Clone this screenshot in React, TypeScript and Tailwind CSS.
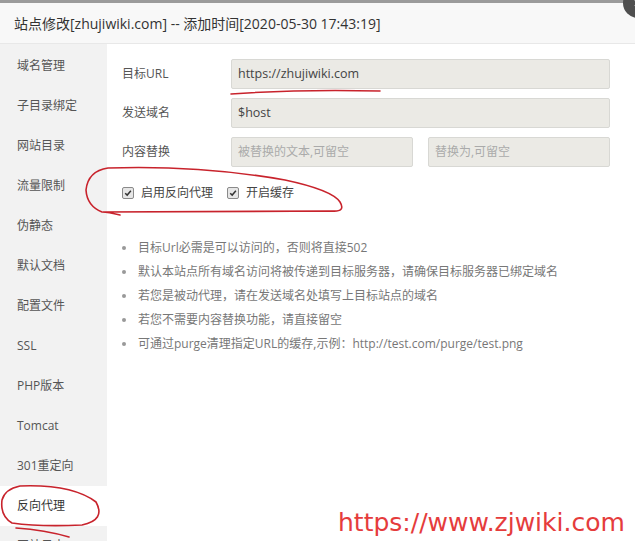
const menu = [
  '域名管理',
  '子目录绑定',
  '网站目录',
  '流量限制',
  '伪静态',
  '默认文档',
  '配置文件',
  'SSL',
  'PHP版本',
  'Tomcat',
  '301重定向',
  '反向代理',
  '网站日志',
]

const tips = [
  '目标Url必需是可以访问的，否则将直接502',
  '默认本站点所有域名访问将被传递到目标服务器，请确保目标服务器已绑定域名',
  '若您是被动代理，请在发送域名处填写上目标站点的域名',
  '若您不需要内容替换功能，请直接留空',
  '可通过purge清理指定URL的缓存,示例：http://test.com/purge/test.png',
]

function Check({ label }: { label: string }) {
  return (
    <label className="flex items-center gap-[7px]">
      <span className="flex h-[12px] w-[12px] items-center justify-center rounded-[2px] border border-[#8a8a8a] bg-[#e6e6e6]">
        <svg viewBox="0 0 10 10" className="h-[8px] w-[8px]">
          <path d="M1.5 5.2 L4 7.6 L8.6 2.2" fill="none" stroke="#333" strokeWidth="1.8" />
        </svg>
      </span>
      <span>{label}</span>
    </label>
  )
}

export default function App() {
  return (
    <div
      className="relative h-[541px] w-[635px] overflow-hidden bg-white text-[#333]"
      style={{ fontFamily: '"Open Sans", "Noto Sans CJK SC", sans-serif' }}
    >
      <div className="h-[3px] bg-[#9b9b9b]" />
      <div className="flex h-[41px] items-center border-b border-[#e8e8e8] bg-[#f8f8f8] pl-[14px] text-[14px] text-[#333]">
        站点修改[zhujiwiki.com] -- 添加时间[2020-05-30 17:43:19]
      </div>

      <div className="flex">
        <div className="w-[107px] shrink-0 bg-[#f2f2f2] pt-[2px]">
          {menu.map((m) => (
            <div
              key={m}
              className={
                m === '反向代理'
                  ? 'flex h-10 items-center bg-white pl-[17px] text-[12px] text-[#333]'
                  : 'flex h-10 items-center pl-[17px] text-[12px] text-[#555]'
              }
            >
              {m}
            </div>
          ))}
        </div>

        <div className="flex-1 pl-[15px] pr-[25px] pt-[15px] text-[12px] text-[#555]">
          <div className="flex flex-col gap-[9px]">
            <div className="flex items-center">
              <span className="w-[109px] shrink-0">目标URL</span>
              <div className="flex h-[30px] flex-1 items-center rounded-[2px] border border-[#d8d8d4] bg-[#ebeae5] pl-[6px] text-[12.5px] text-[#444]">
                https://zhujiwiki.com
              </div>
            </div>
            <div className="flex items-center">
              <span className="w-[109px] shrink-0">发送域名</span>
              <div className="flex h-[30px] flex-1 items-center rounded-[2px] border border-[#d8d8d4] bg-[#ebeae5] pl-[6px] text-[12.5px] text-[#444]">
                $host
              </div>
            </div>
            <div className="flex items-center">
              <span className="w-[109px] shrink-0">内容替换</span>
              <div className="flex flex-1 gap-[15px]">
                <div className="flex h-[30px] flex-1 items-center rounded-[2px] border border-[#d8d8d4] bg-[#ebeae5] pl-[6px] text-[12px] text-[#aaa]">
                  被替换的文本,可留空
                </div>
                <div className="flex h-[30px] flex-1 items-center rounded-[2px] border border-[#d8d8d4] bg-[#ebeae5] pl-[6px] text-[12px] text-[#aaa]">
                  替换为,可留空
                </div>
              </div>
            </div>
          </div>

          <div className="mt-[17px] flex items-center gap-[14px] text-[12px] text-[#444]">
            <Check label="启用反向代理" />
            <Check label="开启缓存" />
          </div>

          <ul className="mt-[34px] flex flex-col text-[12px] text-[#777]">
            {tips.map((t) => (
              <li key={t} className="flex h-6 items-center">
                <span className="mr-[12px] h-[4px] w-[4px] rounded-full bg-[#999]" />
                {t}
              </li>
            ))}
          </ul>
        </div>
      </div>

      <div className="absolute left-[623px] top-[-12px] flex h-[30px] w-[30px] items-center justify-center rounded-full bg-[#4f4f4f]">
        <svg viewBox="0 0 10 10" className="h-[10px] w-[10px]">
          <path d="M2 2 L8 8 M8 2 L2 8" stroke="#fff" strokeWidth="1.6" />
        </svg>
      </div>

      <svg className="pointer-events-none absolute left-0 top-0" width="635" height="541" viewBox="0 0 635 541">
        <g fill="none" stroke="#c8232c" strokeWidth="1.6" strokeLinecap="round">
          <path d="M231 94 Q300 89 380 91" />
          <path d="M120 215 Q108 212 102 212 Q87 206 86 190 Q88 171 108 168 Q200 165 285 180 Q332 190 340 202 Q346 212 332 211 L103 212" />
          <path d="M20 486 Q72 484 96 502 Q106 520 82 525 Q40 527 12 523 Q0 516 2 500 Q5 489 20 486" />
          <path d="M16 528 Q45 530 69 537" />
        </g>
      </svg>

      <div
        className="absolute left-[338px] top-[510px] text-[25px] leading-none text-[#e53c3c]"
        style={{ fontFamily: '"DejaVu Sans", sans-serif' }}
      >
        https://www.zjwiki.com
      </div>
    </div>
  )
}
